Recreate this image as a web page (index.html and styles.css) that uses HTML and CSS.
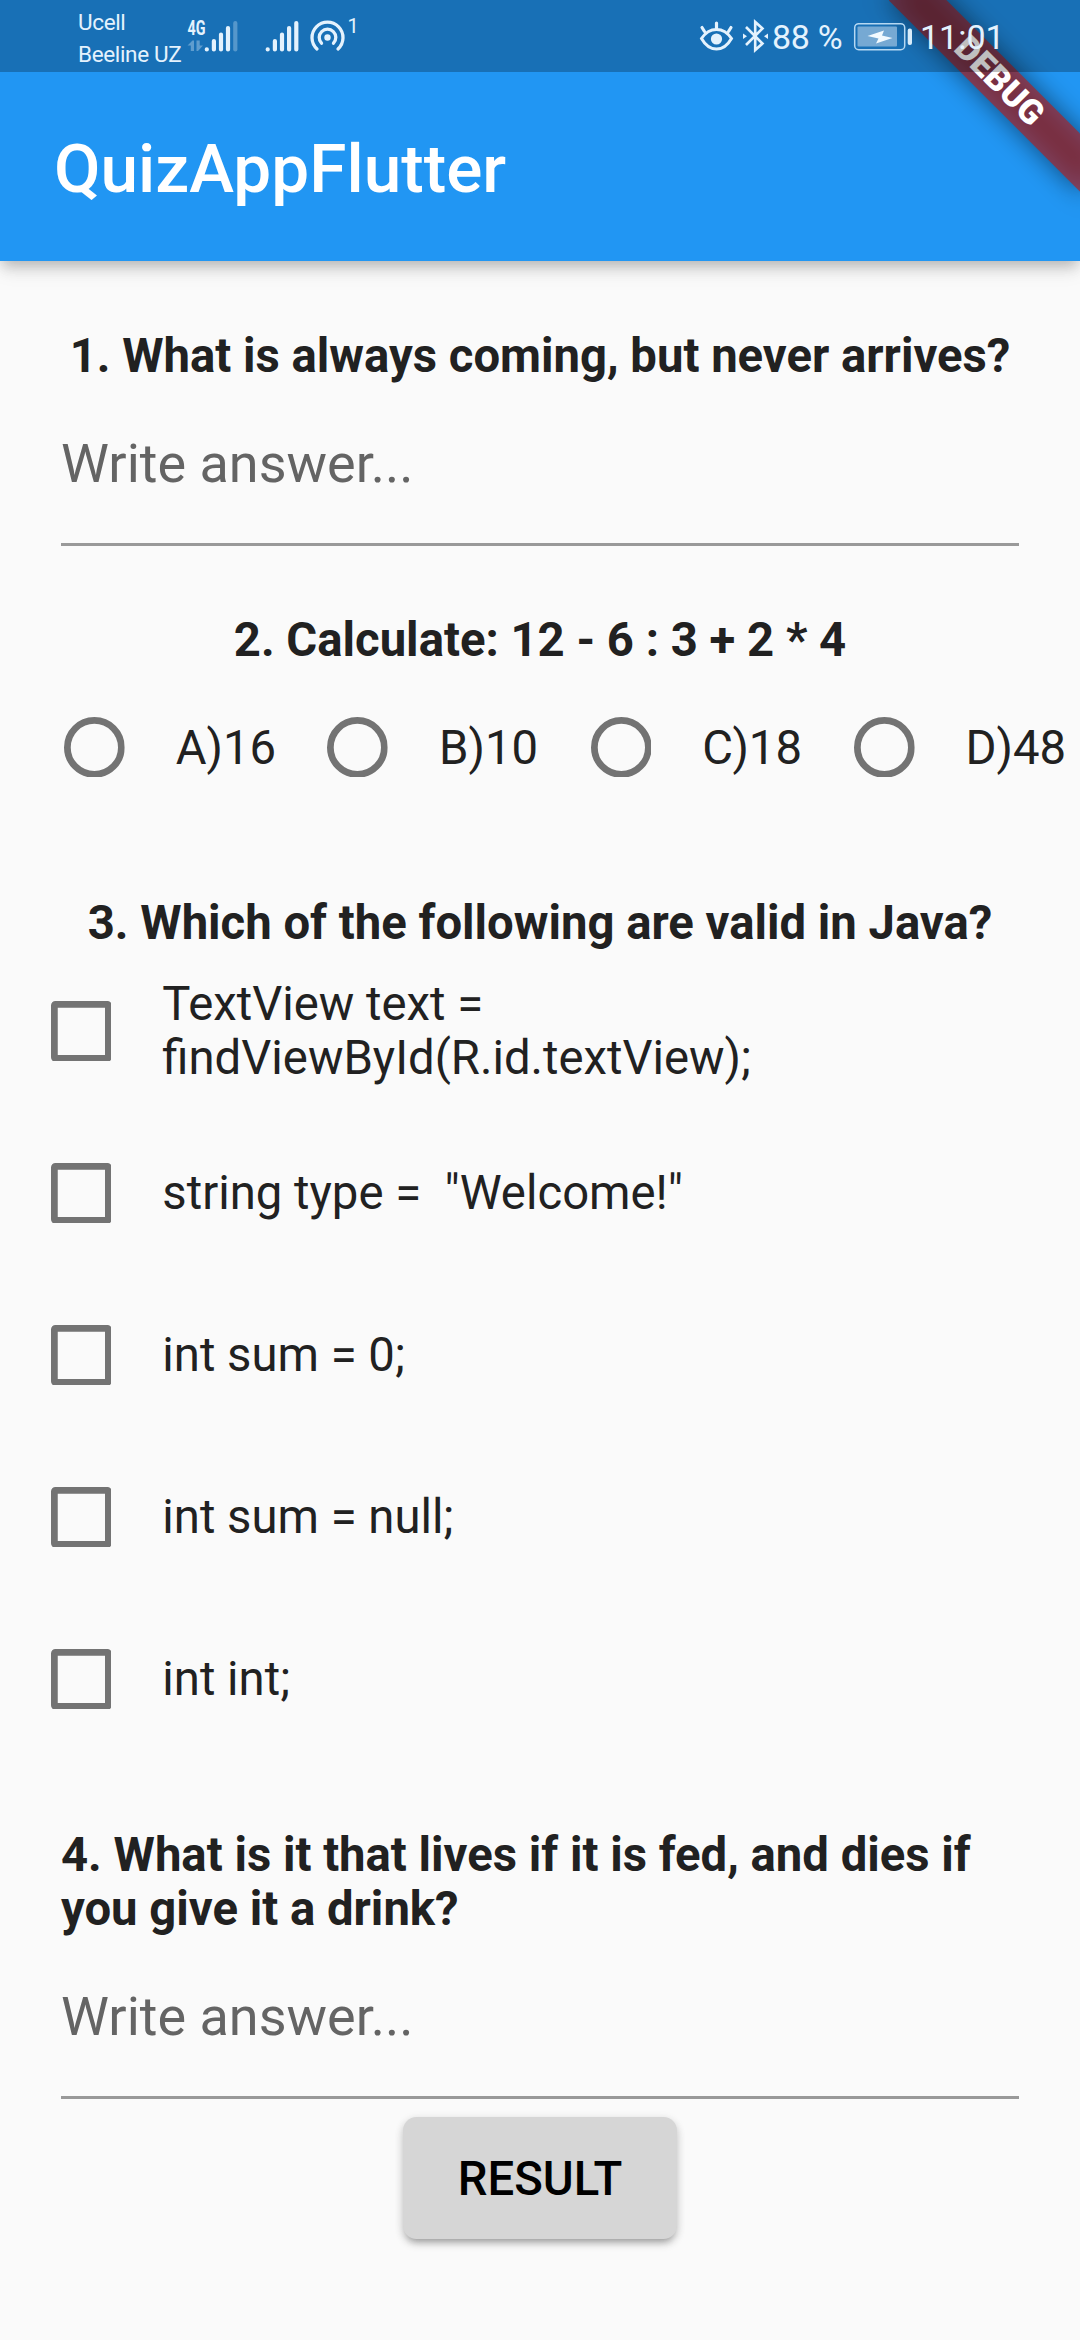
FILE: index.html
```html
<!DOCTYPE html>
<html lang="en">
<head>
<meta charset="utf-8">
<title>QuizAppFlutter</title>
<link rel="stylesheet" href="styles.css">
</head>
<body>
<svg class="defs" aria-hidden="true">
  <symbol id="box" viewBox="0 0 18 18"><rect x="1" y="1" width="16" height="16" rx=".3" fill="none" stroke="#737373" stroke-width="2" stroke-linejoin="round"/></symbol>
  <symbol id="radio" viewBox="0 0 18 18"><circle cx="9" cy="9" r="8" fill="none" stroke="#737373" stroke-width="2"/></symbol>
</svg>
<div class="debug">
  <div class="debug-shadow"></div>
  <div class="debug-band">DEBUG</div>
</div>
<div class="status">
  <div class="carriers"><span>Ucell</span><span>Beeline UZ</span></div>
  <svg class="signals" width="180" height="72" viewBox="180 0 180 72" fill="none" stroke="#e4f2fd" stroke-width="4.2" stroke-linecap="round">
    <path d="M206.800 49.500v-.2M213.900 49.500V41M221 49.500V34.500M228 49.500V28"/>
    <path d="M235.300 49.500V23" opacity=".3"/>
    <path d="M267.700 49.500v-.2M274.900 49.500V41M282 49.500V34.500M289.100 49.500V28M296.300 49.500V23"/>
    <text class="net" x="187.500" y="34.700" textLength="18" lengthAdjust="spacingAndGlyphs">4G</text>
    <g fill="#e4f2fd" stroke="none" opacity=".35"><path d="M187.500 45.500L192.500 40.500H194V51H190.800V45.500Z"/><path d="M196.500 40.500H199.700V45.500H203L198 51H196.500Z"/></g>
    <g stroke-width="3.300"><path d="M317 49a15.500 15.500 0 1 1 21 0"/><path d="M321.500 43.200a8.300 8.300 0 1 1 12 0"/></g>
    <circle cx="327.500" cy="37.500" r="3.200" fill="#e4f2fd" stroke="none"/>
    <text class="hot" x="347.500" y="33">1</text>
  </svg>
  <div class="status-right">
    <svg class="sys" width="70" height="72" viewBox="698 0 70 72" fill="none" stroke="#e4f2fd" stroke-width="3">
      <path d="M701.500 38.500C706 31.500 711 29.500 716.500 29.500S727 31.500 731.500 38.500C727 46.500 722 49 716.500 49S706 46.500 701.500 38.500Z"/>
      <circle cx="716.500" cy="39" r="5.600" fill="#e4f2fd" stroke="none"/>
      <path d="M716.500 28V23M704.500 31.500L702 27.500M728.500 31.500L731 27.500" stroke-linecap="round" stroke-width="3.200"/>
      <path d="M746 27L762.500 43.500L755.200 50V22L762.500 28.500L746 45" stroke-width="2.600"/>
      <path d="M743 33.500l4 2.800-4 2.800zM768 33.500l-4 2.800 4 2.800z" fill="#e4f2fd" stroke="none"/>
    </svg>
    <span class="pct">88 %</span>
    <svg class="batt" width="60" height="72" viewBox="851 0 60 72">
      <rect x="852.700" y="23.700" width="50" height="26" rx="4" fill="none" stroke="#b5d8f2" stroke-width="1.500"/>
      <rect x="855.500" y="26.500" width="39.500" height="20" rx="1" fill="#76a9d3"/>
      <rect x="905.700" y="28.500" width="4.300" height="16.500" rx="2" fill="#d8ecfa"/>
      <path d="M865.500 36L882 30.500L880 35.500L890.500 38L874 43.500L876.500 38.500Z" fill="#f2faff"/>
    </svg>
    <span class="clock">11:01</span>
  </div>
</div>
<header class="appbar"><h1>QuizAppFlutter</h1></header>
<main>
  <section class="quiz">
    <h2 class="center q1">1. What is always coming, but never arrives?</h2>
    <div class="field">Write answer...</div>
    <h2 class="center q2">2. Calculate: 12 - 6 : 3 + 2 * 4</h2>
    <div class="options">
      <label><svg class="mark"><use href="#radio"/></svg><span>A)16</span></label>
      <label><svg class="mark"><use href="#radio"/></svg><span>B)10</span></label>
      <label><svg class="mark"><use href="#radio"/></svg><span>C)18</span></label>
      <label><svg class="mark"><use href="#radio"/></svg><span>D)48</span></label>
    </div>
    <h2 class="center q3">3. Which of the following are valid in Java?</h2>
    <div class="checks">
      <label><svg class="mark"><use href="#box"/></svg><span>TextView text =<br>findViewById(R.id.textView);</span></label>
      <label><svg class="mark"><use href="#box"/></svg><span>string type =&nbsp; "Welcome!"</span></label>
      <label><svg class="mark"><use href="#box"/></svg><span>int sum = 0;</span></label>
      <label><svg class="mark"><use href="#box"/></svg><span>int sum = null;</span></label>
      <label><svg class="mark"><use href="#box"/></svg><span>int int;</span></label>
    </div>
    <h2 class="q4">4. What is it that lives if it is fed, and dies if<br>you give it a drink?</h2>
    <div class="field">Write answer...</div>
    <button class="result">RESULT</button>
  </section>
</main>
</body>
</html>
```
FILE: styles.css
```css
* { box-sizing: border-box; }
body {
  margin: 0;
  width: 1080px;
  height: 2340px;
  overflow: hidden;
  position: relative;
  background: #fafafa;
  color: #212121;
  font-family: Roboto, "Liberation Sans", sans-serif;
  font-size: 47.25px;
  line-height: 54px;
}
.defs { position: absolute; width: 0; height: 0; }
.appbar {
  height: 261px;
  padding: 77px 54px 0;
  display: flex;
  align-items: center;
  background: #2196f3;
  color: #fff;
  box-shadow: 0 7px 13px -3px rgba(0,0,0,.2), 0 13px 17px rgba(0,0,0,.05), 0 3px 20px rgba(0,0,0,.08);
}
h1 { margin: 0; font-size: 67.5px; font-weight: 500; line-height: 80px; }

/* overlays at the top of the screen */
.debug {
  position: absolute;
  inset: 0 0 auto auto;
  width: 300px;
  height: 261px;
  overflow: hidden;
}
.debug-shadow, .debug-band {
  position: absolute;
  left: 83.900px;
  top: 60.900px;
  width: 270px;
  height: 40.500px;
  transform: rotate(45deg);
}
.debug-shadow { background: rgba(0,0,0,.5); filter: blur(13px); }
.debug-band {
  background: rgba(183,28,28,.627);
  color: #fff;
  font-size: 34.400px;
  font-weight: 900;
  line-height: 39.500px;
  text-align: center;
}
.status {
  position: absolute;
  inset: 0 0 auto 0;
  height: 72px;
  display: flex;
  background: rgba(0,0,0,.25);
  color: #e4f2fd;
}
.carriers {
  width: 102px;
  margin-left: 78px;
  padding-top: 6px;
  display: flex;
  flex-direction: column;
  font-size: 22.500px;
  letter-spacing: -.350px;
  line-height: 32px;
  white-space: nowrap;
}
.signals { flex: none; }
.net { font-size: 20px; font-weight: 700; fill: #e4f2fd; stroke: none; }
.hot { font-size: 20px; fill: #e4f2fd; stroke: none; }
.status-right {
  margin-left: 338px;
  display: flex;
  line-height: 74px;
  font-size: 34px;
  white-space: nowrap;
}
.pct { width: 79px; margin-left: 4px; letter-spacing: -.3px; }
.batt { margin-left: 2px; }
.clock { margin-left: 7px; }

.quiz { display: flex; flex-direction: column; }
h2 { margin: 0; font-size: 47.25px; font-weight: 700; line-height: 54px; white-space: nowrap; }
.center { text-align: center; }
.q1 { margin-top: 68px; }
.q2 { margin-top: 67px; }
.q3 { margin-top: 68px; }
.q4 { margin: 68px 61px 0; }
.field {
  height: 163px;
  margin: 0 61px;
  padding-top: 49px;
  border-bottom: 3px solid #999;
  color: #646464;
  font-size: 54px;
  line-height: 64px;
}
.mark { flex: none; width: 60.750px; height: 60.750px; display: block; }
.options {
  display: grid;
  grid-template-columns: repeat(4, 263.250px);
  height: 162px;
  margin: -1px 0 0 64px;
}
.options label { display: flex; align-items: center; gap: 51px; white-space: nowrap; }
.options span { padding-top: 2px; }
.checks { display: grid; grid-auto-rows: 162px; margin-left: 50.600px; }
.checks label { display: flex; align-items: center; gap: 51px; }
.result {
  align-self: center;
  width: 274px;
  height: 122px;
  margin-top: 18px;
  padding: 2px 0 0;
  border: 0;
  border-radius: 13.500px;
  background: #d6d6d6;
  color: #000;
  font: 500 47.25px/54px Roboto, sans-serif;
  box-shadow: 0 7px 6px -5px rgba(0,0,0,.2), 0 5px 8px rgba(0,0,0,.16), 0 2px 10px rgba(0,0,0,.1);
}
```
